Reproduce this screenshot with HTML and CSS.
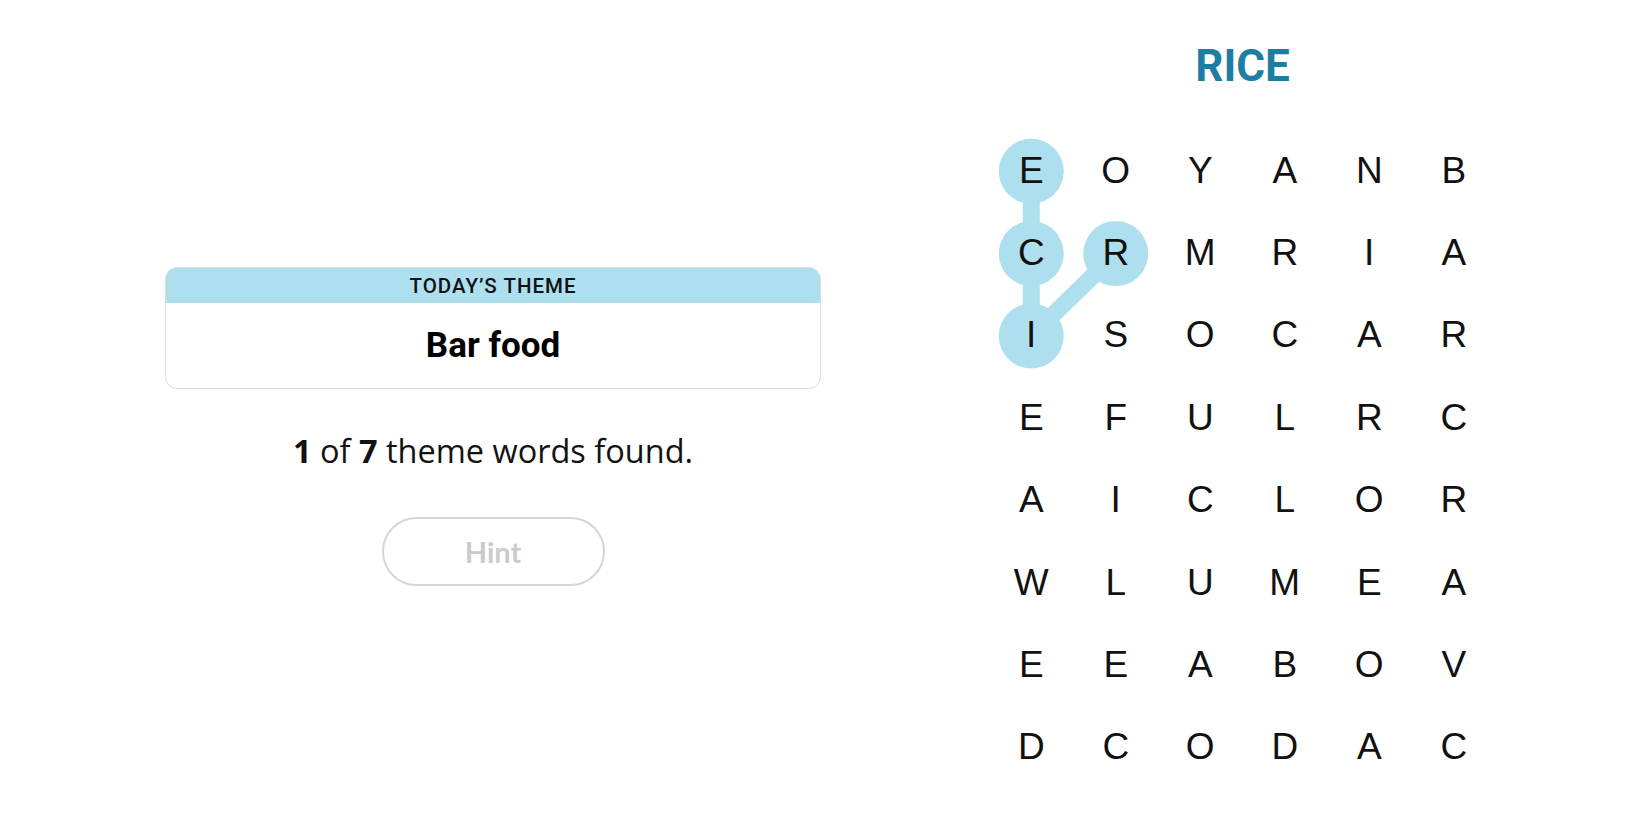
FILE: index.html
```html
<!DOCTYPE html>
<html lang="en">
<head>
<meta charset="utf-8">
<title>Strands</title>
<link rel="stylesheet" href="styles.css">
</head>
<body>
<main class="page">
  <section class="left">
    <div class="theme-card">
      <div class="theme-header">TODAY’S THEME</div>
      <div class="theme-body">Bar food</div>
    </div>
    <p class="stats"><b>1</b> of <b>7</b> theme words found.</p>
    <button class="hint" type="button">Hint</button>
  </section>
  <section class="right">
    <h1 class="found-word">RICE</h1>
    <div class="board">
      <svg class="board-paths" width="507" height="659" viewBox="0 0 507 659" aria-hidden="true">
        <polyline points="42.25,41.2 42.25,123.6 42.25,206 126.75,123.6" fill="none" stroke="#aedfee" stroke-width="17" stroke-linejoin="round"/>
        <circle cx="42.25" cy="41.2" r="32.5" fill="#aedfee"/>
        <circle cx="42.25" cy="123.6" r="32.5" fill="#aedfee"/>
        <circle cx="42.25" cy="206" r="32.5" fill="#aedfee"/>
        <circle cx="126.75" cy="123.6" r="32.5" fill="#aedfee"/>
      </svg>
      <span class="cell">E</span><span class="cell">O</span><span class="cell">Y</span><span class="cell">A</span><span class="cell">N</span><span class="cell">B</span>
      <span class="cell">C</span><span class="cell">R</span><span class="cell">M</span><span class="cell">R</span><span class="cell">I</span><span class="cell">A</span>
      <span class="cell">I</span><span class="cell">S</span><span class="cell">O</span><span class="cell">C</span><span class="cell">A</span><span class="cell">R</span>
      <span class="cell">E</span><span class="cell">F</span><span class="cell">U</span><span class="cell">L</span><span class="cell">R</span><span class="cell">C</span>
      <span class="cell">A</span><span class="cell">I</span><span class="cell">C</span><span class="cell">L</span><span class="cell">O</span><span class="cell">R</span>
      <span class="cell">W</span><span class="cell">L</span><span class="cell">U</span><span class="cell">M</span><span class="cell">E</span><span class="cell">A</span>
      <span class="cell">E</span><span class="cell">E</span><span class="cell">A</span><span class="cell">B</span><span class="cell">O</span><span class="cell">V</span>
      <span class="cell">D</span><span class="cell">C</span><span class="cell">O</span><span class="cell">D</span><span class="cell">A</span><span class="cell">C</span>
    </div>
  </section>
</main>
</body>
</html>
```
FILE: styles.css
```css
html, body {
  margin: 0;
  padding: 0;
  background: #ffffff;
}

body {
  font-family: "Liberation Sans", Arial, sans-serif;
  color: #000000;
}

.page {
  display: flex;
  align-items: flex-start;
  padding-left: 165px;
  height: 825px;
  box-sizing: border-box;
  overflow: hidden;
}

.left {
  width: 656px;
  padding-top: 267px;
  display: flex;
  flex-direction: column;
  align-items: center;
}

.theme-card {
  width: 100%;
  box-sizing: border-box;
  border: 1px solid #dadada;
  border-radius: 12px;
  overflow: hidden;
}

.theme-header {
  height: 35px;
  background: #aedfee;
  display: flex;
  align-items: center;
  justify-content: center;
  font-family: Roboto, "Liberation Sans", sans-serif;
  font-weight: 500;
  font-size: 20.5px;
  letter-spacing: 1px;
  color: #121212;
}

.theme-body {
  height: 85px;
  display: flex;
  align-items: center;
  justify-content: center;
  font-family: Roboto, "Liberation Sans", sans-serif;
  font-weight: 700;
  font-size: 35px;
  color: #000000;
}

.stats {
  margin: 44px 0 0;
  font-family: "Open Sans", "Liberation Sans", sans-serif;
  font-size: 32.5px;
  line-height: 36px;
  color: #121212;
}

.stats b {
  font-weight: 700;
}

.hint {
  margin-top: 48px;
  width: 223px;
  height: 69px;
  box-sizing: border-box;
  border: 2px solid #d6d6d6;
  border-radius: 35px;
  background: #ffffff;
  font-family: Lato, "Liberation Sans", sans-serif;
  font-weight: 700;
  font-size: 29px;
  color: #cbcbcb;
  padding: 0;
}

.right {
  margin-left: 168px;
  width: 507px;
}

.found-word {
  margin: 39px 0 0;
  text-align: center;
  font-family: Roboto, "Liberation Sans", sans-serif;
  font-weight: 700;
  font-size: 44px;
  line-height: 54px;
  color: #1e7ea1;
}

.board {
  position: relative;
  isolation: isolate;
  margin-top: 36.5px;
  display: grid;
  grid-template-columns: repeat(6, 84.5px);
  grid-template-rows: repeat(8, 82.4px);
}

.board-paths {
  position: absolute;
  left: 0;
  top: 0;
  z-index: -1;
}

.cell {
  display: flex;
  align-items: center;
  justify-content: center;
  font-family: "Liberation Sans", Arial, sans-serif;
  font-size: 37px;
  color: #111111;
}
```
